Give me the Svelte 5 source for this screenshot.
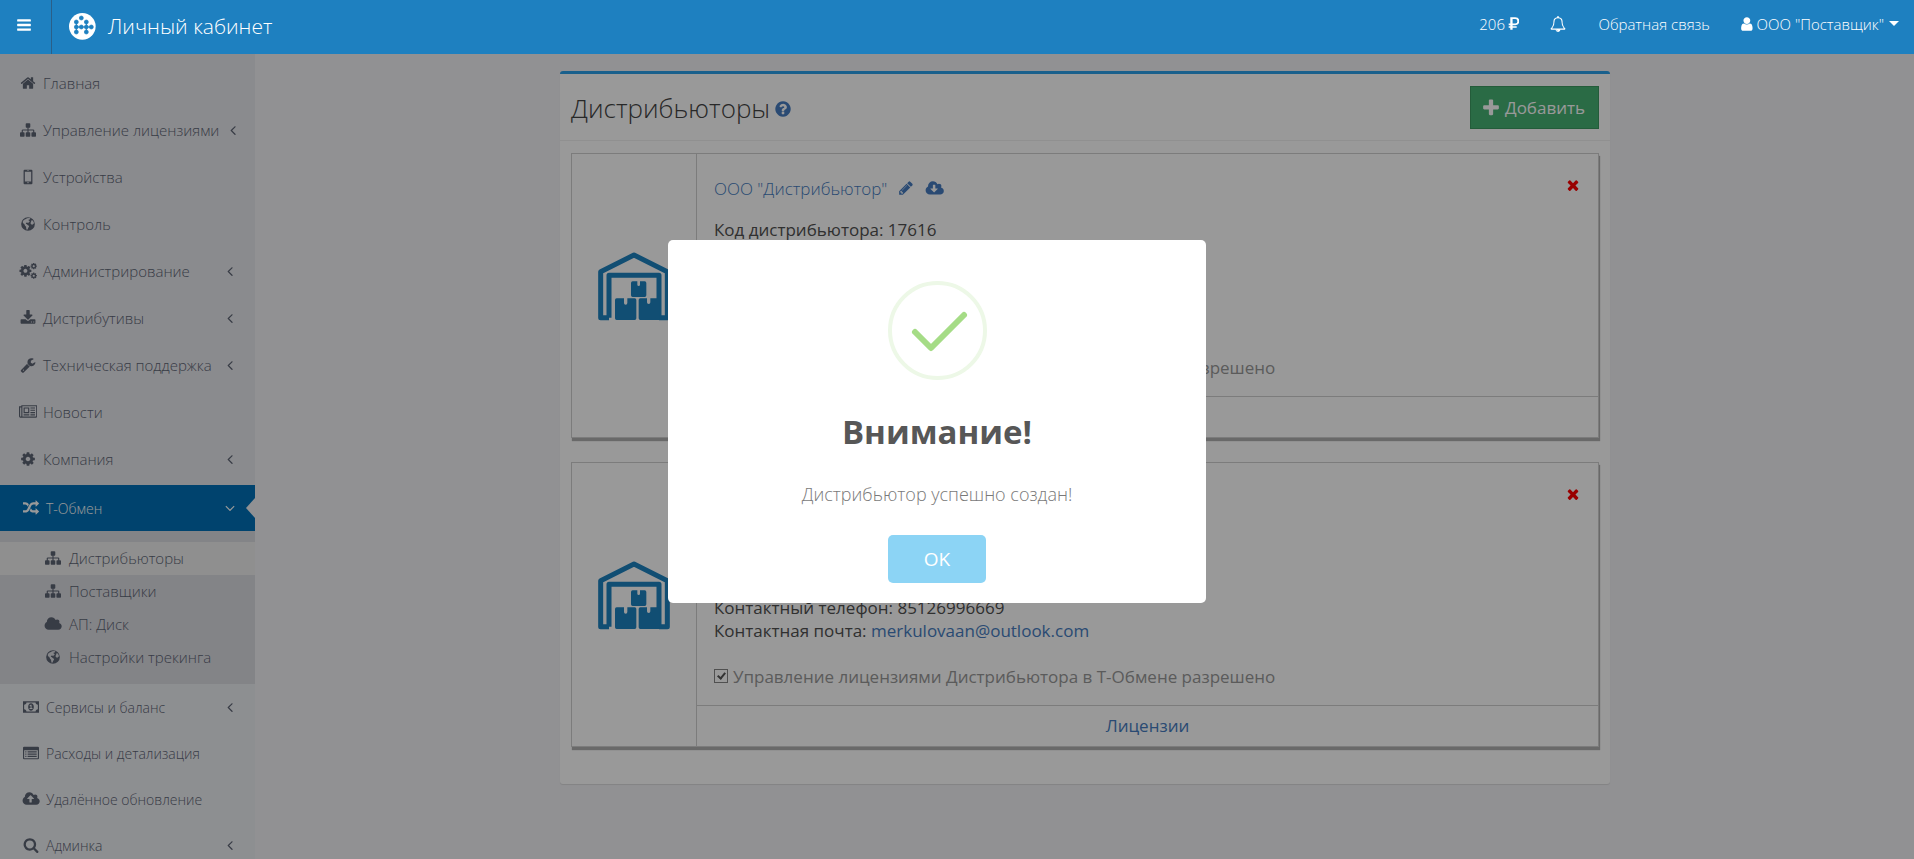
<script>
  const cloudBody =
    'm640 224q0 159-112.5 271.5t-271.5 112.5h-1088q-185 0-316.5-131.5t-131.5-316.5q0-130 70-240t188-165q-2-30-2-43 0-212 150-362t362-150q156 0 285.5 87t188.5 231q71-62 166-62 106 0 181 75t75 181q0 76-41 138 130 31 213.5 135.5t83.5 238.5z';
  const cog =
    'M1152 896q0-106-75-181t-181-75-181 75-75 181 75 181 181 75 181-75 75-181zm512-109v222q0 12-8 23t-20 13l-185 28q-19 54-39 91 35 50 107 138 10 12 10 25t-9 23q-27 37-99 108t-94 71q-12 0-26-9l-138-108q-44 23-91 38-16 136-29 186-7 28-36 28h-222q-14 0-24.5-8.5t-11.5-21.5l-28-184q-49-16-90-37l-141 107q-10 9-25 9-14 0-25-11-126-114-165-168-7-10-7-23 0-12 8-23 15-21 51-66.5t54-70.5q-27-50-41-99l-183-27q-13-2-21-12.5t-8-23.5v-222q0-12 8-23t19-13l186-28q14-46 39-92-40-57-107-138-10-12-10-24 0-10 9-23 26-36 98.5-107.5t94.5-71.5q13 0 26 10l138 107q44-23 91-38 16-136 29-186 7-28 36-28h222q14 0 24.5 8.5t11.5 21.5l28 184q49 16 90 37l142-107q9-9 24-9 13 0 25 10 129 119 165 170 7 8 7 22 0 12-8 23-15 21-51 66.5t-54 70.5q26 50 41 98l183 28q13 2 21 12.5t8 23.5z';
  const icons = {
    bars: { d: 'M1664 1344v128q0 26-19 45t-45 19h-1408q-26 0-45-19t-19-45v-128q0-26 19-45t45-19h1408q26 0 45 19t19 45zm0-512v128q0 26-19 45t-45 19h-1408q-26 0-45-19t-19-45v-128q0-26 19-45t45-19h1408q26 0 45 19t19 45zm0-512v128q0 26-19 45t-45 19h-1408q-26 0-45-19t-19-45v-128q0-26 19-45t45-19h1408q26 0 45 19t19 45z' },
    home: { d: 'M1472 992v480q0 26-19 45t-45 19h-384v-384h-256v384h-384q-26 0-45-19t-19-45v-480q0-1 .5-3t.5-3l575-474 575 474q1 2 1 6zm223-69l-62 74q-8 9-21 11h-3q-13 0-21-7l-692-577-692 577q-12 8-24 7-13-2-21-11l-62-74q-8-10-7-23.5t11-21.5l719-599q32-26 76-26t76 26l244 204v-195q0-14 9-23t23-9h192q14 0 23 9t9 23v408l219 182q10 8 11 21.5t-7 23.5z' },
    sitemap: { d: 'M1792 1248v320q0 40-28 68t-68 28h-320q-40 0-68-28t-28-68v-320q0-40 28-68t68-28h96v-192h-512v192h96q40 0 68 28t28 68v320q0 40-28 68t-68 28h-320q-40 0-68-28t-28-68v-320q0-40 28-68t68-28h96v-192h-512v192h96q40 0 68 28t28 68v320q0 40-28 68t-68 28h-320q-40 0-68-28t-28-68v-320q0-40 28-68t68-28h96v-192q0-52 38-90t90-38h512v-192h-96q-40 0-68-28t-28-68v-320q0-40 28-68t68-28h320q40 0 68 28t28 68v320q0 40-28 68t-68 28h-96v192h512q52 0 90 38t38 90v192h96q40 0 68 28t28 68z' },
    mobile: { d: 'M512 96h768q112 0 112 112v1376q0 112-112 112h-768q-112 0-112-112v-1376q0-112 112-112zM544 320v1072h704v-1072zM784 176v56h224v-56zM896 1468a72 72 0 1 0 1 0z' },
    globe: { d: 'M896 128a768 768 0 1 0 0 1536a768 768 0 1 0 0-1536zM800 250l230-20 130 60-60 90-110 10-50 90 90 40 60 110-110 60-70 110-90-60-130 20-40 100 120 50 90 100 130 70 20 110-90 120-60 170-90 80-70-150-20-210-110-110-90-200-130-90-50-160 120-200 180-90zM1290 480l140 30 110 180 20 170-100 20-90 130-110-80-90-130 70-150z' },
    cog: { d: cog },
    download: { d: 'M1344 1344q0-26-19-45t-45-19-45 19-19 45 19 45 45 19 45-19 19-45zm256 0q0-26-19-45t-45-19-45 19-19 45 19 45 45 19 45-19 19-45zm128-224v320q0 40-28 68t-68 28h-1472q-40 0-68-28t-28-68v-320q0-40 28-68t68-28h465l135 136q58 56 136 56t136-56l136-136h464q40 0 68 28t28 68zm-325-569q17 41-14 70l-448 448q-18 19-45 19t-45-19l-448-448q-31-29-14-70 17-39 59-39h256v-448q0-26 19-45t45-19h256q26 0 45 19t19 45v448h256q42 0 59 39z' },
    wrench: { d: 'M448 1472q0-26-19-45t-45-19-45 19-19 45 19 45 45 19 45-19 19-45zm644-420l-682 682q-37 37-90 37-52 0-91-37l-106-108q-38-36-38-90 0-53 38-91l681-681q39 98 114.5 173.5t173.5 114.5zm634-435q0 39-23 106-47 134-164.5 217.5t-258.5 83.5q-185 0-316.5-131.5t-131.5-316.5 131.5-316.5 316.5-131.5q58 0 121.5 16.5t107.5 46.5q16 11 16 28t-16 28l-293 169v224l193 107q5-3 79-48.5t135.5-81 70.5-35.5q15 0 23.5 10t8.5 25z' },
    news: { w: 2048, d: 'M1024 512h-384v384h384v-384zm128 640v128h-640v-128h640zm0-768v640h-640v-640h640zm640 768v128h-512v-128h512zm0-256v128h-512v-128h512zm0-256v128h-512v-128h512zm0-256v128h-512v-128h512zm-1536 960v-960h-128v960q0 26 19 45t45 19 45-19 19-45zm1664 0v-1088h-1536v1088q0 33-11 64h1483q26 0 45-19t19-45zm128-1216v1216q0 80-56 136t-136 56h-1664q-80 0-136-56t-56-136v-1088h256v-128h1792z' },
    random: { d: 'M666 481q-60 92-137 273-22-45-37-72.5t-40.5-63.5-51-56.5-63-35-81.5-14.5h-224q-14 0-23-9t-9-23v-192q0-14 9-23t23-9h224q250 0 410 225zm1126 799q0 14-9 23l-320 320q-9 9-23 9-13 0-22.5-9.5t-9.5-22.5v-192q-32 0-85 .5t-81 1-73-1-71-5-64-10.5-63-18.5-58-28.5-59-40-55-53.5-56-69.5q59-93 136-273 22 45 37 72.5t40.5 63.5 51 56.5 63 35 81.5 14.5h256v-192q0-14 9-23t23-9q12 0 24 10l319 319q9 9 9 23zm0-896q0 14-9 23l-320 320q-9 9-23 9-13 0-22.5-9.5t-9.5-22.5v-192h-256q-48 0-87 15t-69 45-51 61.5-45 77.5q-32 62-78 171-29 66-49.5 111t-54 105-64 100-74 83-90 68.5-106.5 42-128 16.5h-224q-14 0-23-9t-9-23v-192q0-14 9-23t23-9h224q48 0 87-15t69-45 51-61.5 45-77.5q32-62 78-171 29-66 49.5-111t54-105 64-100 74-83 90-68.5 106.5-42 128-16.5h256v-192q0-14 9-23t23-9q12 0 24 10l319 319q9 9 9 23z' },
    angleLeft: { d: 'M1203 544q0 13-10 23l-393 393 393 393q10 10 10 23t-10 23l-50 50q-10 10-23 10t-23-10l-466-466q-10-10-10-23t10-23l466-466q10-10 23-10t23 10l50 50q10 10 10 23z' },
    angleDown: { d: 'M1395 736q0 13-10 23l-466 466q-10 10-23 10t-23-10l-466-466q-10-10-10-23t10-23l50-50q10-10 23-10t23 10l393 393 393-393q10-10 23-10t23 10l50 50q10 10 10 23z' },
    cloud: { w: 2048, d: 'M1344 928' + cloudBody },
    cloudUp: { w: 2048, d: 'M1344 864q0-14-9-23l-352-352q-9-9-23-9t-23 9l-351 351q-10 12-10 24 0 14 9 23t23 9h224v352q0 13 9.5 22.5t22.5 9.5h192q13 0 22.5-9.5t9.5-22.5v-352h224q13 0 22.5-9.5t9.5-22.5zM1344 928' + cloudBody },
    cloudDown: { w: 2048, d: 'M1344 928q0-14-9-23t-23-9h-224v-352q0-13-9.5-22.5t-22.5-9.5h-192q-13 0-22.5 9.5t-9.5 22.5v352h-224q-13 0-22.5 9.5t-9.5 22.5q0 14 9 23l352 352q9 9 23 9t23-9l351-351q10-12 10-24z' + cloudBody },
    search: { d: 'M1216 832q0-185-131.5-316.5t-316.5-131.5-316.5 131.5-131.5 316.5 131.5 316.5 316.5 131.5 316.5-131.5 131.5-316.5zm512 832q0 52-38 90t-90 38q-54 0-90-38l-343-342q-179 124-399 124-143 0-273.5-55.5t-225-150-150-225-55.5-273.5 55.5-273.5 150-225 225-150 273.5-55.5 273.5 55.5 225 150 150 225 55.5 273.5q0 220-124 399l343 343q37 37 37 90z' },
    money: { d: 'M0 256H1792V1536H0zM384 384q0 106-75 181t-181 75v512q106 0 181 75t75 181h1024q0-106 75-181t181-75v-512q-106 0-181-75t-75-181zM896 480c190 0 320 190 320 416s-130 416-320 416-320-190-320-416 130-416 320-416zM730 1120h330v-110h-100v-380h-110l-130 120 70 80 60-55v235h-120z' },
    list: { d: 'M128 192h1536q128 0 128 128v1152q0 128-128 128h-1536q-128 0-128-128v-1152q0-128 128-128zM128 576v896h1536v-896zM256 704h128v128h-128zM512 704h1024v128h-1024zM256 960h128v128h-128zM512 960h1024v128h-1024zM256 1216h128v128h-128zM512 1216h1024v128h-1024z' },
    bell: { d: 'M912 1696q0-16-16-16-59 0-101.5-42.5t-42.5-101.5q0-16-16-16t-16 16q0 73 51.5 124.5t124.5 51.5q16 0 16-16zm-666-288h1300q-266-300-266-832 0-51-24-105t-69-103-121.5-80.5-169.5-31.5-169.5 31.5-121.5 80.5-69 103-24 105q0 532-266 832zm1482 0q0 52-38 90t-90 38h-448q0 106-75 181t-181 75-181-75-75-181h-448q-52 0-90-38t-38-90q50-42 91-88t85-119.5 74.5-158.5 50-206 19.5-260q0-152 117-282.5t307-158.5q-8-19-8-39 0-40 28-68t68-28 68 28 28 68q0 20-8 39 190 28 307 158.5t117 282.5q0 139 19.5 260t50 206 74.5 158.5 85 119.5 91 88z' },
    user: { w: 1536, d: 'M1408 1399q0 109-62.5 187t-150.5 78h-854q-88 0-150.5-78t-62.5-187q0-85 8.5-160.5t31.5-152 58.5-131 94-89 134.5-34.5q131 128 313 128t313-128q76 0 134.5 34.5t94 89 58.5 131 31.5 152 8.5 160.5zm-256-887q0 159-112.5 271.5t-271.5 112.5-271.5-112.5-112.5-271.5 112.5-271.5 271.5-112.5 271.5 112.5 112.5 271.5z' },
    rub: { w: 1280, d: 'M256 128h560a450 450 0 0 1 0 900h-300v110h460v180h-460v218h-260v-218h-180v-180h180v-110h-180v-200h180zM516 340v488h290a244 244 0 0 0 0-488z' },
    plus: { d: 'M1600 736v192q0 40-28 68t-68 28h-416v416q0 40-28 68t-68 28h-192q-40 0-68-28t-28-68v-416h-416q-40 0-68-28t-28-68v-192q0-40 28-68t68-28h416v-416q0-40 28-68t68-28h192q40 0 68 28t28 68v416h416q40 0 68 28t28 68z' },
    question: { d: 'M1024 1376v-192q0-14-9-23t-23-9h-192q-14 0-23 9t-9 23v192q0 14 9 23t23 9h192q14 0 23-9t9-23zm256-672q0-88-55.5-163t-138.5-116-170-41q-243 0-371 213-15 24 8 42l132 100q7 6 19 6 16 0 25-12 53-68 86-92 34-24 86-24 48 0 85.5 26t37.5 59q0 38-20 61t-68 45q-63 28-115.5 86.5t-52.5 125.5v36q0 14 9 23t23 9h192q14 0 23-9t9-23q0-19 21.5-49.5t54.5-49.5q32-18 49-28.5t46-35 44.5-48 28-60.5 12.5-81zm384 192q0 209-103 385.5t-279.5 279.5-385.5 103-385.5-103-279.5-279.5-103-385.5 103-385.5 279.5-279.5 385.5-103 385.5 103 279.5 279.5 103 385.5z' },
    pencil: { d: 'M491 1536l91-91-235-235-91 91v107h128v128h107zm523-928q0-22-22-22-10 0-17 7l-542 542q-7 7-7 17 0 22 22 22 10 0 17-7l542-542q7-7 7-17zm-54-192l416 416-832 832h-416v-416zm683 96q0 53-37 90l-166 166-416-416 166-165q36-38 90-38 53 0 91 38l235 234q37 39 37 91z' },
    times: { d: 'M1490 1322q0 40-28 68l-136 136q-28 28-68 28t-68-28l-294-294-294 294q-28 28-68 28t-68-28l-136-136q-28-28-28-68t28-68l294-294-294-294q-28-28-28-68t28-68l136-136q28-28 68-28t68 28l294 294 294-294q28-28 68-28t68 28l136 136q28 28 28 68t-28 68l-294 294 294 294q28 28 28 68z' }
  };

  const menu = [
    { icon: 'home', label: 'Главная' },
    { icon: 'sitemap', label: 'Управление лицензиями', more: true },
    { icon: 'mobile', label: 'Устройства' },
    { icon: 'globe', label: 'Контроль' },
    { icon: 'cogs', label: 'Администрирование', more: true },
    { icon: 'download', label: 'Дистрибутивы', more: true },
    { icon: 'wrench', label: 'Техническая поддержка', more: true },
    { icon: 'news', label: 'Новости' },
    { icon: 'cog', label: 'Компания', more: true }
  ];
  const exchange = [
    { icon: 'sitemap', label: 'Дистрибьюторы', current: true },
    { icon: 'sitemap', label: 'Поставщики' },
    { icon: 'cloud', label: 'АП: Диск' },
    { icon: 'globe', label: 'Настройки трекинга' }
  ];
  const services = [
    { icon: 'money', label: 'Сервисы и баланс', more: true },
    { icon: 'list', label: 'Расходы и детализация' },
    { icon: 'cloudUp', label: 'Удалённое обновление' },
    { icon: 'search', label: 'Админка', more: true }
  ];
  const distributors = [
    { id: 1, name: 'ООО "Дистрибьютор"', code: '17616' },
    { id: 2, phone: '85126996669', mail: 'merkulovaan@outlook.com' }
  ];
  let open = $state(true);
</script>

{#snippet icon(name)}
  {#if name === 'cogs'}
    <svg class="icon" viewBox="0 0 2048 1792" fill-rule="evenodd" aria-hidden="true">
      <path d={cog} transform="translate(-60 100) scale(.87)" />
      <path d={cog} transform="translate(1240 -60) scale(.46)" />
      <path d={cog} transform="translate(1240 1010) scale(.46)" />
    </svg>
  {:else}
    <svg class="icon" viewBox="0 0 {icons[name].w ?? 1792} 1792" fill-rule="evenodd" aria-hidden="true">
      <path d={icons[name].d} />
    </svg>
  {/if}
{/snippet}

{#snippet entry(item)}
  <li>
    <a class="entry" href="#menu">
      <span class="slot">{@render icon(item.icon)}</span>
      <span class="label">{item.label}</span>
      {#if item.more}<span class="more">{@render icon('angleLeft')}</span>{/if}
    </a>
  </li>
{/snippet}

<div class="page">
  <header>
    <button class="toggle" aria-label="Меню">{@render icon('bars')}</button>
    <a class="brand" href="#home">
      <svg class="logo" viewBox="0 0 81 81" aria-hidden="true">
        <circle cx="40" cy="40" r="40" fill="#fff" />
        <g fill="#1e80c0" stroke="#1e80c0" stroke-width="2">
          <path d="M22 42H67M22 27V57M52 27V57" stroke-width="3" fill="none" />
          <circle cx="37" cy="15" r="6" /><circle cx="22" cy="27" r="6" /><circle cx="52" cy="27" r="6" />
          <circle cx="22" cy="42" r="6" /><circle cx="37" cy="42" r="6" /><circle cx="52" cy="42" r="6" /><circle cx="67" cy="42" r="6" />
          <circle cx="22" cy="57" r="6" /><circle cx="52" cy="57" r="6" />
        </g>
      </svg>
      Личный кабинет
    </a>
    <nav class="top">
      <a class="balance" href="#balance">206 {@render icon('rub')}</a>
      <a class="alerts" href="#alerts" aria-label="Уведомления">{@render icon('bell')}</a>
      <a href="#feedback">Обратная связь</a>
      <button class="account">{@render icon('user')}ООО "Поставщик"<span class="caret"></span></button>
    </nav>
  </header>

  <div class="body">
    <aside>
      <ul class="main-list">
        {#each menu as item}{@render entry(item)}{/each}
      </ul>
      <div class="exchange">
        <a class="entry active" href="#exchange">
          <span class="slot">{@render icon('random')}</span>
          <span class="label">Т-Обмен</span>
          <span class="more">{@render icon('angleDown')}</span>
        </a>
        <ul class="sub">
          {#each exchange as item}
            <li>
              <a class:current={item.current} href="#sub">
                <span class="slot">{@render icon(item.icon)}</span>{item.label}
              </a>
            </li>
          {/each}
        </ul>
      </div>
      <ul class="lower-list">
        {#each services as item}{@render entry(item)}{/each}
      </ul>
    </aside>

    <main>
      <section class="box">
        <div class="box-head">
          <h1>Дистрибьюторы</h1>
          <a class="help" href="#help" aria-label="Справка">{@render icon('question')}</a>
          <button class="add">{@render icon('plus')}Добавить</button>
        </div>
        <div class="cards">
          {#each distributors as d (d.id)}
            <article>
              <div class="picture">
                <svg viewBox="0 0 216 205" aria-hidden="true">
                  <g fill="none" stroke="#1d82c0" stroke-width="15" stroke-linejoin="round">
                    <path d="M33 197H8V59L108 9L208 59V197H183" />
                    <path d="M33 197V70H183V197" />
                  </g>
                  <g fill="#1d82c0">
                    <path d="M104 88h14v10q0 4 4 4t4-4v-10h14q5 0 5 5v37q0 5-5 5h-36q-5 0-5-5v-37q0-5 5-5z" />
                    <path d="M56 139h22v14q0 5 5 5t5-5v-14h22q5 0 5 5v55q0 5-5 5h-54q-5 0-5-5v-55q0-5 5-5z" />
                    <path d="M127 139h20v12q0 5 5 5t5-5v-12h22q5 0 5 5v60h-57q-5 0-5-5v-55q0-5 5-5z" />
                  </g>
                </svg>
              </div>
              <div class="info">
                <div class="details">
                  <div class="name">
                    {#if d.name}
                      <a class="light" href="#distributor">{d.name}</a>
                      <a class="edit" href="#edit" aria-label="Изменить">{@render icon('pencil')}</a>
                      <a class="load" href="#load" aria-label="Скачать">{@render icon('cloudDown')}</a>
                    {/if}
                    <button class="remove" aria-label="Удалить">{@render icon('times')}</button>
                  </div>
                  <div class="facts">
                    {#if d.code}<p>Код дистрибьютора: {d.code}</p>{/if}
                    {#if d.phone}
                      <p class="phone">Контактный телефон: {d.phone}</p>
                      <p>Контактная почта: <a href="mailto:{d.mail}">{d.mail}</a></p>
                    {/if}
                  </div>
                  <label class="permit">
                    <input type="checkbox" checked disabled />
                    Управление лицензиями Дистрибьютора в Т-Обмене разрешено
                  </label>
                </div>
                <a class="licenses" href="#licenses">Лицензии</a>
              </div>
            </article>
          {/each}
        </div>
      </section>
    </main>
  </div>

  {#if open}
    <div class="overlay">
      <div class="modal" role="alertdialog" aria-labelledby="alert-title" aria-describedby="alert-text">
        <svg class="success" viewBox="0 0 99 99" fill="none" aria-hidden="true">
          <circle cx="49.5" cy="49.5" r="47.5" stroke="#edf8e7" stroke-width="4" />
          <path d="M27 51L43 67L76 34" stroke="#a5dc86" stroke-width="6" stroke-linecap="round" stroke-linejoin="round" />
        </svg>
        <h2 id="alert-title">Внимание!</h2>
        <p id="alert-text">Дистрибьютор успешно создан!</p>
        <button class="ok" onclick={() => (open = false)}>OK</button>
      </div>
    </div>
  {/if}
</div>

<style>
  :global(body) {
    background: #f2f2f5;
    overflow: hidden;
  }
  .page {
    display: flex;
    flex-direction: column;
    height: 100vh;
    overflow: hidden;
    font-family: 'Open Sans', 'Noto Sans', sans-serif;
    font-size: 17px;
    color: #505050;
  }
  ul, h1, h2, p {
    margin: 0;
    padding: 0;
    list-style: none;
  }
  a {
    color: #467cc0;
    text-decoration: none;
  }
  button {
    border: 0;
    background: none;
    font: inherit;
    color: inherit;
    padding: 0;
    cursor: pointer;
  }
  .icon {
    height: 16px;
    fill: currentColor;
    flex: none;
    display: block;
  }

  header {
    display: flex;
    flex: none;
    height: 54px;
    background: #1e80c0;
    color: #fff;
    position: relative;
    z-index: 3;
  }
  header a {
    color: #fff;
  }
  .toggle {
    width: 52px;
    box-sizing: border-box;
    border-right: 1px solid #2a5f88;
    padding: 0 12px 4px 16px;
  }
  .brand {
    display: flex;
    align-items: center;
    gap: 12px;
    padding-left: 17px;
    padding-bottom: 2px;
    font-size: 21px;
    font-weight: 300;
  }
  .logo {
    width: 27px;
    height: 27px;
  }
  .top {
    display: flex;
    align-items: center;
    margin-left: auto;
    padding: 0 15px 7px 0;
    font-size: 15px;
    font-weight: 300;
  }
  .balance {
    display: flex;
    align-items: center;
    gap: 3px;
  }
  .alerts {
    margin: 0 32px 0 31px;
  }
  .account {
    display: flex;
    align-items: center;
    gap: 3px;
    margin-left: 30px;
  }
  .caret {
    border: 5px solid transparent;
    border-top-color: #fff;
    border-bottom: 0;
    margin-left: 2px;
  }

  .body {
    display: flex;
    flex: 1;
    min-height: 0;
  }
  aside {
    width: 255px;
    flex: none;
    background: #e7e8ed;
    color: #5d6474;
    font-size: 15px;
    font-weight: 300;
    white-space: nowrap;
  }
  .main-list {
    padding: 5px 0 3px;
  }
  .entry {
    display: flex;
    align-items: center;
    gap: 6px;
    height: 47px;
    padding: 0 17px 0 19px;
    color: inherit;
  }
  .slot {
    width: 18px;
    flex: none;
    display: flex;
    justify-content: center;
  }
  .more {
    margin-left: auto;
  }
  .exchange {
    background: #dbdce2;
  }
  .exchange .entry,
  .lower-list .entry {
    padding-left: 22px;
    font-size: 14px;
  }
  .entry.active {
    position: relative;
    height: 46px;
    background: #0071b8;
    color: #fff;
  }
  .entry.active::after {
    content: '';
    position: absolute;
    right: 0;
    top: 13px;
    border: 10px solid transparent;
    border-right: 9px solid #f2f2f5;
    border-left: 0;
  }
  .sub {
    padding: 11px 0 10px;
  }
  .sub a {
    display: flex;
    align-items: center;
    gap: 7px;
    box-sizing: border-box;
    height: 33px;
    padding: 0 0 2px 44px;
    color: inherit;
  }
  .sub .current {
    background: #eeefef;
  }
  .lower-list {
    background: #eceef2;
  }
  .lower-list .entry {
    height: 46px;
  }

  main {
    flex: 1;
    display: grid;
    grid-template-columns: 11fr 38fr 11fr;
    align-items: start;
    padding: 17px 0 0 1px;
  }
  .box {
    grid-column: 2;
    background: #fff;
    border-top: 3px solid #2ba0ea;
    border-radius: 3px;
    box-shadow: 0 1px 1px rgba(0, 0, 0, 0.1);
  }
  .box-head {
    display: flex;
    align-items: center;
    gap: 4px;
    padding: 12px 11px 11px;
    border-bottom: 1px solid #f0f0f0;
  }
  h1 {
    font-size: 26px;
    line-height: 36px;
    font-weight: 300;
    color: #444;
  }
  .help .icon {
    height: 18px;
  }
  .help {
    padding-top: 2px;
  }
  .add {
    display: flex;
    align-items: center;
    gap: 4px;
    height: 43px;
    margin-left: auto;
    padding: 0 13px 0 10px;
    background: #46b274;
    border: 1px solid #3c9a62;
    color: #fff;
    font-size: 17px;
  }
  .add .icon {
    height: 20px;
  }
  .cards {
    display: flex;
    flex-direction: column;
    gap: 24px;
    padding: 12px 11px 37px;
  }
  article {
    display: flex;
    border: 1px solid #cfcfcf;
    box-shadow: 1px 3px 1px #b0b0b0;
  }
  .picture {
    width: 124px;
    flex: none;
    display: flex;
    align-items: center;
    justify-content: center;
    border-right: 1px solid #cfcfcf;
  }
  .picture svg {
    width: 72px;
    margin-bottom: 18px;
  }
  .info {
    flex: 1;
  }
  .details {
    padding: 19px 20px 17px 17px;
  }
  .name {
    display: flex;
    align-items: center;
    height: 30px;
    margin-bottom: 15px;
  }
  .light {
    font-weight: 300;
  }
  .edit {
    margin: 0 11px;
  }
  .load .icon {
    height: 17px;
  }
  .remove {
    margin: 0 -3px 6px auto;
    color: #f00;
  }
  .facts {
    min-height: 115px;
    line-height: 23px;
    display: flex;
    flex-direction: column;
  }
  .phone {
    margin-top: auto;
  }
  .permit {
    display: flex;
    align-items: center;
    gap: 5px;
    margin-top: 23px;
    line-height: 23px;
    color: #989898;
  }
  .permit input {
    appearance: none;
    position: relative;
    width: 14px;
    height: 14px;
    margin: 0 0 2px;
    border: 1px solid #858585;
    background: #fff;
  }
  .permit input::after {
    content: '';
    position: absolute;
    left: 4px;
    top: 1px;
    width: 3px;
    height: 6px;
    border: solid #555;
    border-width: 0 2px 2px 0;
    transform: rotate(40deg);
  }
  .licenses {
    display: block;
    border-top: 1px solid #cfcfcf;
    line-height: 40px;
    text-align: center;
  }

  .overlay {
    position: fixed;
    inset: 0;
    z-index: 2;
    display: flex;
    align-items: center;
    justify-content: center;
    padding: 0 40px 16px 0;
    background: rgba(0, 0, 0, 0.4);
  }
  .modal {
    width: 538px;
    box-sizing: border-box;
    display: flex;
    flex-direction: column;
    align-items: center;
    padding: 41px 20px 20px;
    border-radius: 5px;
    background: #fff;
  }
  .success {
    width: 99px;
    height: 99px;
  }
  h2 {
    margin: 29px 0 27px;
    font-size: 33px;
    line-height: 45px;
    font-weight: 700;
    color: #575757;
  }
  .modal p {
    font-size: 18px;
    line-height: 26px;
    font-weight: 300;
    color: #797979;
  }
  .ok {
    width: 98px;
    height: 48px;
    margin-top: 28px;
    border-radius: 5px;
    background: #8cd4f5;
    color: #fff;
    font-size: 19px;
  }
</style>
